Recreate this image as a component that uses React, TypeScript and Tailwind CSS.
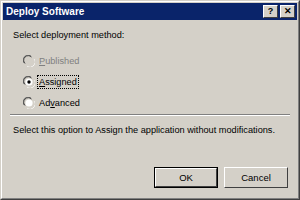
import React from 'react';

const Radio = ({ checked, disabled }: { checked?: boolean; disabled?: boolean }) => (
    <svg width="12" height="12" viewBox="0 0 12 12" className="shrink-0">
        <path d="M1 8 A5 5 0 0 1 8 1" stroke="#808080" fill="none" />
        <path d="M2 8.5 A4 4 0 0 1 8.5 2" stroke="#404040" fill="none" />
        <path d="M11 4 A5 5 0 0 1 4 11" stroke="#ffffff" fill="none" />
        <path d="M10 3.5 A4 4 0 0 1 3.5 10" stroke="#d4d0c8" fill="none" />
        <circle cx="6" cy="6" r="3.6" fill={disabled ? '#d4d0c8' : '#ffffff'} />
        {checked && <circle cx="6" cy="6" r="1.7" fill="#000000" />}
    </svg>
);

const CaptionButton = ({ children }: { children: React.ReactNode }) => (
    <div className="w-[15px] h-[13px] bg-[#d4d0c8] border border-t-white border-l-white border-r-[#404040] border-b-[#404040] flex items-center justify-center text-[9px] font-bold leading-none text-black">
        {children}
    </div>
);

const PushButton = ({ label, isDefault }: { label: string; isDefault?: boolean }) => (
    <div className={`w-[64px] h-[21px] bg-[#d4d0c8] flex ${isDefault ? 'border border-black' : ''}`}>
        <div className="flex-1 flex items-center justify-center border border-t-white border-l-white border-r-[#404040] border-b-[#404040] text-[9.5px] text-black">
            {label}
        </div>
    </div>
);

export default function App() {
    return (
        <div className="w-[300px] h-[200px] bg-[#d4d0c8] font-['Liberation_Sans',Arial,sans-serif] overflow-hidden border border-t-[#d4d0c8] border-l-[#d4d0c8] border-r-[#404040] border-b-[#404040]">
            <div className="h-full flex flex-col border border-t-white border-l-white border-r-[#808080] border-b-[#808080] p-[1px]">
                {/* Title bar */}
                <div className="h-[17px] bg-[#0a246a] flex items-center justify-between pl-[3px] pr-[2px]">
                    <span className="text-white font-bold text-[10px] leading-none">Deploy Software</span>
                    <div className="flex gap-[2px]">
                        <CaptionButton>?</CaptionButton>
                        <CaptionButton>✕</CaptionButton>
                    </div>
                </div>

                {/* Body */}
                <div className="flex-1 flex flex-col px-[7px] text-[9.2px] leading-[12px] text-black">
                    <div className="pt-[9px] pl-[3px]">Select deployment method:</div>
                    <div className="flex flex-col gap-[9px] pt-[14px] pl-[13px]">
                        <div className="flex items-center gap-[3px] text-[#808080]">
                            <Radio disabled />
                            <span className="px-[1px]"><u>P</u>ublished</span>
                        </div>
                        <div className="flex items-center gap-[3px]">
                            <Radio checked />
                            <span className="outline outline-1 outline-dotted outline-black px-[1px]"><u>A</u>ssigned</span>
                        </div>
                        <div className="flex items-center gap-[3px]">
                            <Radio />
                            <span className="px-[1px]">Ad<u>v</u>anced</span>
                        </div>
                    </div>
                    <div className="mt-[5px] border-t border-t-[#808080] border-b border-b-white" />
                    <div className="pt-[8px] pl-[3px]">Select this option to Assign the application without modifications.</div>
                    <div className="mt-auto mb-[9px] flex justify-end gap-[6px] pr-[2px]">
                        <PushButton label="OK" isDefault />
                        <PushButton label="Cancel" />
                    </div>
                </div>
            </div>
        </div>
    );
}
